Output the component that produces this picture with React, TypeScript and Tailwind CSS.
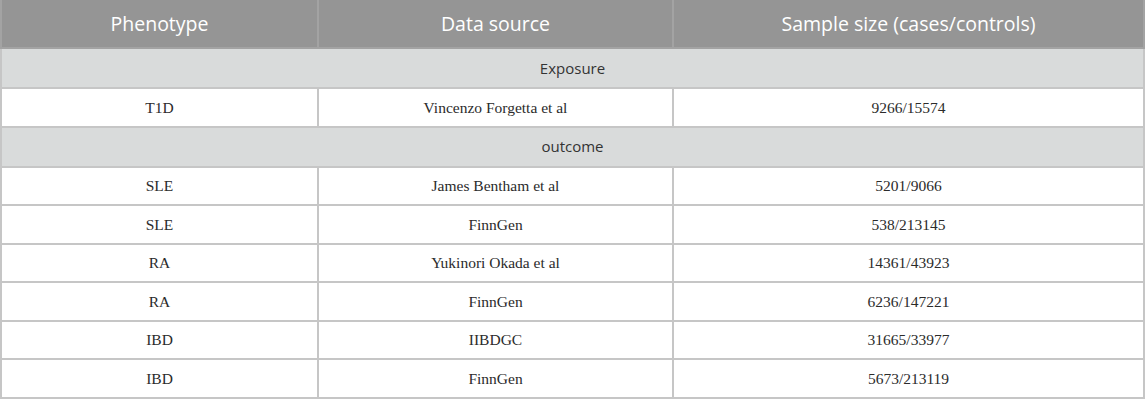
const exposure = [["T1D", "Vincenzo Forgetta et al", "9266/15574"]];

const outcome = [
  ["SLE", "James Bentham et al", "5201/9066"],
  ["SLE", "FinnGen", "538/213145"],
  ["RA", "Yukinori Okada et al", "14361/43923"],
  ["RA", "FinnGen", "6236/147221"],
  ["IBD", "IIBDGC", "31665/33977"],
  ["IBD", "FinnGen", "5673/213119"],
];

function GroupRow({ label }: { label: string }) {
  return (
    <tr className="h-[40px] bg-[#d9dbdb]">
      <td colSpan={3} className="border-2 border-[#c6c6c6] text-center text-[15px] text-[#333] font-['Open_Sans',sans-serif]">
        {label}
      </td>
    </tr>
  );
}

function DataRow({ cells }: { cells: string[] }) {
  return (
    <tr className="h-[38.5px] bg-white">
      {cells.map((c, i) => (
        <td
          key={i}
          className="border-2 border-[#c6c6c6] text-center text-[15.5px] text-[#2b2b2b] font-['Liberation_Serif',serif]"
        >
          {c}
        </td>
      ))}
    </tr>
  );
}

export default function App() {
  return (
    <div className="w-[1145px] h-[400px] bg-white">
      <table className="w-full border-collapse table-fixed">
        <colgroup>
          <col className="w-[317px]" />
          <col className="w-[355px]" />
          <col />
        </colgroup>
        <thead>
          <tr className="h-[48px] bg-[#959595] text-white text-[19.5px] font-['Open_Sans',sans-serif]">
            <th className="font-normal border-2 border-[#a3a3a3] border-t-0">Phenotype</th>
            <th className="font-normal border-2 border-[#a3a3a3] border-t-0">Data source</th>
            <th className="font-normal border-2 border-[#a3a3a3] border-t-0">Sample size (cases/controls)</th>
          </tr>
        </thead>
        <tbody>
          <GroupRow label="Exposure" />
          {exposure.map((r, i) => (
            <DataRow key={i} cells={r} />
          ))}
          <GroupRow label="outcome" />
          {outcome.map((r, i) => (
            <DataRow key={i} cells={r} />
          ))}
        </tbody>
      </table>
    </div>
  );
}
